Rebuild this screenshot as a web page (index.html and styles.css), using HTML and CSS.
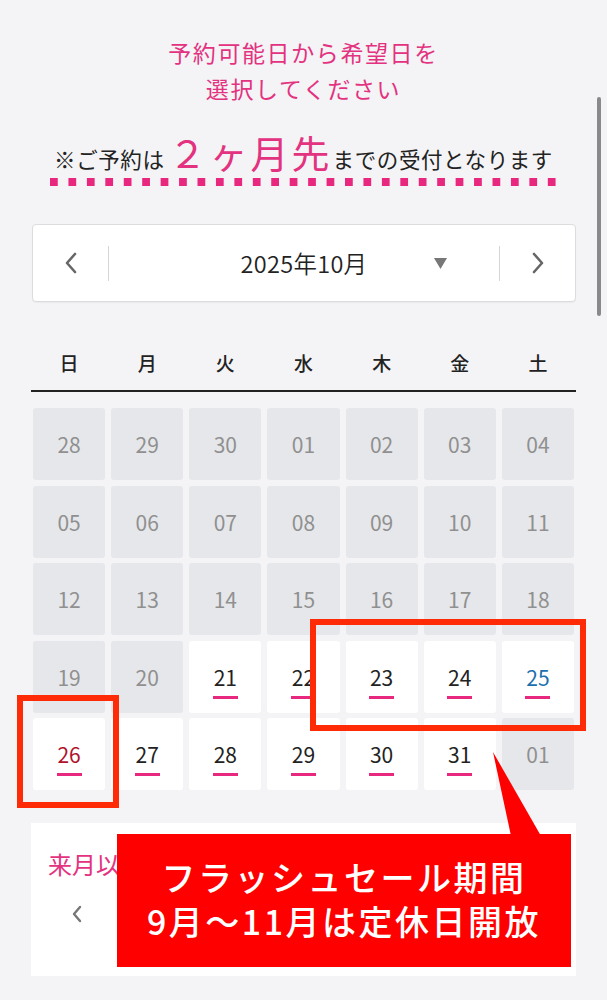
FILE: index.html
```html
<!DOCTYPE html>
<html lang="ja">
<head>
<meta charset="utf-8">
<title>予約カレンダー</title>
<link rel="stylesheet" href="styles.css">
</head>
<body>
<div class="page">
  <main class="wrap">
    <h1 class="title">予約可能日から希望日を<br>選択してください</h1>
    <p class="notice">※ご予約は<span class="big">２ヶ月先</span>までの受付となります</p>
    <div class="dots"></div>

    <div class="month-bar">
      <button class="nav">
        <svg width="14" height="22" viewBox="0 0 14 22"><polyline points="11,2 3,11 11,20" fill="none" stroke="#666" stroke-width="2.6" stroke-linecap="round" stroke-linejoin="round"/></svg>
      </button>
      <span class="divider"></span>
      <div class="month">
        <span class="month-label">2025年10月</span>
        <svg class="caret" width="13" height="11" viewBox="0 0 13 11"><polygon points="0,0 13,0 6.5,11" fill="#777"/></svg>
      </div>
      <span class="divider"></span>
      <button class="nav">
        <svg width="14" height="22" viewBox="0 0 14 22"><polyline points="3,2 11,11 3,20" fill="none" stroke="#666" stroke-width="2.6" stroke-linecap="round" stroke-linejoin="round"/></svg>
      </button>
    </div>

    <div class="weekdays">
      <span>日</span><span>月</span><span>火</span><span>水</span><span>木</span><span>金</span><span>土</span>
    </div>

    <div class="grid">
      <div class="cell off">28</div><div class="cell off">29</div><div class="cell off">30</div><div class="cell off">01</div><div class="cell off">02</div><div class="cell off">03</div><div class="cell off">04</div>
      <div class="cell off">05</div><div class="cell off">06</div><div class="cell off">07</div><div class="cell off">08</div><div class="cell off">09</div><div class="cell off">10</div><div class="cell off">11</div>
      <div class="cell off">12</div><div class="cell off">13</div><div class="cell off">14</div><div class="cell off">15</div><div class="cell off">16</div><div class="cell off">17</div><div class="cell off">18</div>
      <div class="cell off">19</div><div class="cell off">20</div><div class="cell on">21</div><div class="cell on">22</div><div class="cell on">23</div><div class="cell on">24</div><div class="cell on sat">25</div>
      <div class="cell on sun">26</div><div class="cell on">27</div><div class="cell on">28</div><div class="cell on">29</div><div class="cell on">30</div><div class="cell on">31</div><div class="cell off">01</div>
    </div>

    <section class="card">
      <h2 class="card-title">来月以降の空き状況</h2>
      <div class="card-nav">
        <svg width="12" height="18" viewBox="0 0 12 18"><polyline points="9,2 3,9 9,16" fill="none" stroke="#777" stroke-width="2.4" stroke-linecap="round" stroke-linejoin="round"/></svg>
      </div>
    </section>
  </main>

  <div class="mark mark-a"></div>
  <div class="mark mark-b"></div>
  <svg class="tail" width="607" height="1000" viewBox="0 0 607 1000"><polygon points="511,836 541,836 493,752" fill="#ff0000"/></svg>
  <div class="callout">フラッシュセール期間<br>9月～11月は定休日開放</div>
  <div class="scrollbar"></div>
</div>
</body>
</html>
```

FILE: styles.css
```css
* { box-sizing: border-box; }
html, body { margin: 0; padding: 0; }
body {
  background: #f4f4f6;
  font-family: "Noto Sans CJK JP", "Noto Sans", sans-serif;
  color: #222;
  overflow: hidden;
}
.page {
  position: relative;
  width: 607px;
  height: 1000px;
}
.wrap {
  width: 545px;
  margin: 0 auto;
  padding-top: 34px;
}
.title {
  margin: 0;
  text-align: center;
  color: #e3327f;
  font-size: 23px;
  font-weight: 400;
  line-height: 36px;
  letter-spacing: 1.6px;
}
.notice {
  margin: 26px 0 0;
  text-align: center;
  font-size: 21.5px;
  line-height: 40px;
  height: 40px;
  letter-spacing: 0.6px;
  white-space: nowrap;
}
.notice .big {
  color: #e3327f;
  font-size: 38px;
  letter-spacing: 3px;
  margin-left: 4px;
}
.dots {
  width: 506px;
  height: 8px;
  margin: 6px 0 0 19px;
  background-image: linear-gradient(90deg, #e8287e 8px, transparent 8px);
  background-size: 18.44px 8px;
  background-repeat: repeat-x;
}
.month-bar {
  margin-top: 38px;
  margin-left: 1px;
  width: 544px;
  height: 78px;
  background: #fff;
  border: 1px solid #dcdcdf;
  border-radius: 4px;
  display: flex;
  align-items: center;
  box-shadow: 0 1px 1px rgba(0,0,0,0.04);
}
.nav {
  width: 75px;
  height: 100%;
  border: 0;
  background: transparent;
  padding: 0;
  display: flex;
  align-items: center;
  justify-content: center;
}
.divider {
  width: 1px;
  height: 35px;
  background: #d6d6d8;
}
.month {
  flex: 1;
  height: 100%;
  position: relative;
  display: flex;
  align-items: center;
  justify-content: center;
}
.month-label {
  font-size: 23.5px;
  color: #222;
  letter-spacing: 0.3px;
  font-weight: 350;
}
.caret {
  position: absolute;
  right: 52px;
  top: 33px;
}
.weekdays {
  margin-top: 40px;
  display: grid;
  grid-template-columns: repeat(7, 1fr);
  column-gap: 6px;
  padding: 0 2px 6px;
  line-height: 42px;
  font-size: 19px;
  font-weight: 500;
  text-align: center;
  border-bottom: 2px solid #222;
}
.grid {
  margin-top: 16px;
  padding: 0 2px;
  display: grid;
  grid-template-columns: repeat(7, 1fr);
  grid-auto-rows: 72px;
  column-gap: 6px;
  row-gap: 5.5px;
}
.cell {
  border-radius: 3px;
  display: flex;
  align-items: center;
  justify-content: center;
  font-size: 21px;
  position: relative;
}
.cell.off {
  background: #e6e7ea;
  color: #909090;
}
.cell.on {
  background: #fff;
  color: #222;
}
.cell.on::after {
  content: "";
  position: absolute;
  left: 50%;
  top: 55px;
  width: 25px;
  height: 3px;
  margin-left: -12.5px;
  background: #e8287e;
}
.cell.sat { color: #1c6fae; }
.cell.sun { color: #b0122c; }
.card {
  margin-top: 33px;
  height: 153px;
  background: #fff;
  padding: 20px 0 0 17px;
}
.card-title {
  margin: 0;
  width: 69px;
  overflow: hidden;
  font-size: 24px;
  font-weight: 400;
  line-height: 42px;
  color: #e3327f;
  white-space: nowrap;
}
.card-nav {
  margin: 18px 0 0 23px;
  height: 22px;
  display: flex;
  align-items: center;
}
.mark {
  position: absolute;
  border: 6px solid #ff2b06;
}
.mark-a {
  left: 310px;
  top: 619px;
  width: 276px;
  height: 112px;
}
.mark-b {
  left: 17px;
  top: 695px;
  width: 102px;
  height: 113px;
}
.tail {
  position: absolute;
  left: 0;
  top: 0;
  pointer-events: none;
}
.callout {
  position: absolute;
  left: 117px;
  top: 834px;
  width: 454px;
  height: 133px;
  background: #ff0000;
  color: #fff;
  font-size: 34px;
  font-weight: 500;
  line-height: 44px;
  letter-spacing: 2.5px;
  text-align: center;
  padding-top: 21px;
  white-space: nowrap;
}
.scrollbar {
  position: absolute;
  left: 597px;
  top: 97px;
  width: 4px;
  height: 219px;
  border-radius: 2px;
  background: #8a8a8c;
}
```
